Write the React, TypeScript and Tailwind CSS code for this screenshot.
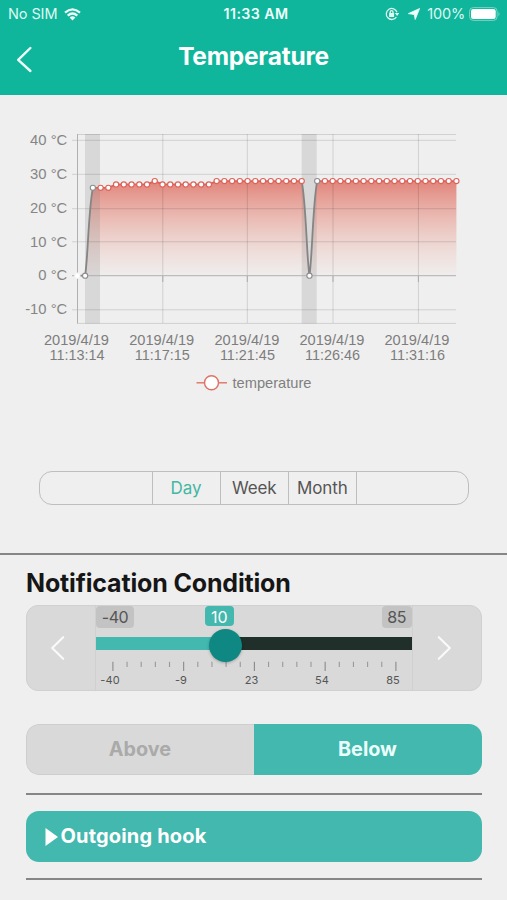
import React from "react";

const X0 = 77.4;
const STEP = 7.735;
const y = (t: number) => 180.7 - t * 3.38;
const readings: number[] = [
  0, 0, 26, 26, 26, 27, 27, 27, 27, 27, 28,
  ...Array<number>(7).fill(27),
  ...Array<number>(12).fill(28),
  0,
  ...Array<number>(19).fill(28),
];
const points = readings.map((t, i) => ({ x: X0 + i * STEP, y: y(t) }));

const ease = (a: { x: number; y: number }, b: { x: number; y: number }) => {
  const flat = Math.abs(a.y - b.y) < 10;
  if (flat) return `L${b.x} ${b.y}`;
  return a.y > b.y
    ? `C${a.x + 3} ${a.y - 20} ${b.x - 4.6} ${b.y + 24} ${b.x} ${b.y}`
    : `C${a.x + 4.6} ${a.y + 24} ${b.x - 3} ${b.y - 20} ${b.x} ${b.y}`;
};
const trace = (from: number, to: number) => {
  let d = `M${points[from].x} ${points[from].y}`;
  for (let i = from + 1; i <= to; i++) d += ease(points[i - 1], points[i]);
  return d;
};

const stamps = [
  [76.5, "11:13:14"],
  [161.7, "11:17:15"],
  [246.9, "11:21:45"],
  [332, "11:26:46"],
  [417, "11:31:16"],
] as const;

function Chart() {
  const last = points[points.length - 1];
  return (
    <svg width="507" height="305" viewBox="0 0 507 305" className="block font-['Liberation_Sans',sans-serif]">
      <defs>
        <linearGradient id="heat" gradientUnits="userSpaceOnUse" x1="0" y1="86" x2="0" y2="181">
          <stop offset="0" stopColor="#df7064" stopOpacity="0.84" />
          <stop offset="1" stopColor="#efb8a8" stopOpacity="0.04" />
        </linearGradient>
      </defs>
      <path d={`${trace(0, 49)}L${last.x} ${y(0)}Z`} fill="url(#heat)" />
      <g fill="#7b7b7b" fillOpacity="0.2">
        <rect x="85" y="39" width="15" height="189.5" />
        <rect x="301.7" y="39" width="15" height="189.5" />
      </g>
      <g stroke="#000" strokeOpacity="0.13" strokeWidth="1">
        <path d="M77 39.5H456M72 45.3H456M72 79.3H456M72 113.7H456M72 146.8H456M72 214.8H456M77 228.4H456" />
        <path d="M162.8 39V228M247.3 39V228M333 39V228M418.4 39V228" />
      </g>
      <path d="M77.5 39V228.5M72 180.7H456" stroke="#b0b0b0" strokeWidth="1" />
      <path d="M162.8 181V187M247.3 181V187M333 181V187M418.4 181V187" stroke="#aaa" strokeWidth="1" />
      <g fill="none" strokeWidth="1.8">
        <path d={trace(0, 2)} stroke="#858585" />
        <path d={trace(2, 29)} stroke="#dc6158" />
        <path d={trace(29, 31)} stroke="#858585" />
        <path d={trace(31, 49)} stroke="#dc6158" />
      </g>
      {points.map((p, i) => (
        <circle
          key={i}
          cx={p.x}
          cy={p.y}
          r="2.6"
          fill="#fff"
          stroke={i === 0 ? "#f5f5f5" : i < 3 || (i > 29 && i < 32) ? "#8d8d8d" : "#dc6158"}
          strokeWidth="1.1"
        />
      ))}
      <g fontSize="14.8" fill="#868686" textAnchor="end">
        {[40, 30, 20, 10, 0, -10].map((t) => (
          <text key={t} x="67.3" y={y(t) + 4.7}>{t} °C</text>
        ))}
      </g>
      <g fontSize="14.4" fill="#7d7d7d" textAnchor="middle">
        {stamps.map(([x, time]) => (
          <React.Fragment key={time}>
            <text x={x} y="250" textLength="65" lengthAdjust="spacingAndGlyphs">2019/4/19</text>
            <text x={x + 0.5} y="264.7" textLength="55" lengthAdjust="spacingAndGlyphs">{time}</text>
          </React.Fragment>
        ))}
      </g>
      <path d="M196.5 287.8H227" stroke="#e07265" strokeWidth="1.4" />
      <circle cx="211.5" cy="287.8" r="7" fill="#fff" stroke="#e07265" strokeWidth="1.4" />
      <text x="232.5" y="292.8" fontSize="14.3" fill="#808080" textLength="79" lengthAdjust="spacingAndGlyphs">temperature</text>
    </svg>
  );
}

function Header() {
  return (
    <header className="h-[95px] bg-[#10b69b] text-white">
      <div className="grid h-7 grid-cols-[1fr_80px_1fr] items-center pr-[6px] pl-2 text-[14.5px]">
        <div className="flex items-center gap-[7px] text-[#dff8f2]">
          <span className="tracking-[-0.1px]">No SIM</span>
          <svg width="17" height="13" viewBox="0 0 17 13" fill="none" stroke="#effffb" strokeWidth="2.2">
            <path d="M1 4.6Q8.5 -1.8 16 4.6M3.7 7.6Q8.5 3.4 13.3 7.6" />
            <path d="M5.6 9.4Q8.5 7 11.4 9.4L8.5 12.4Z" fill="#effffb" stroke="none" />
          </svg>
        </div>
        <div className="pl-[3px] text-center text-[14.2px] font-semibold tracking-[0.4px] whitespace-nowrap text-[#effffb]">11:33 AM</div>
        <div className="flex items-center justify-end text-[#dff8f2]">
          <svg width="14" height="14" viewBox="0 0 14 14" fill="none" stroke="#dff8f2" strokeWidth="1.3">
            <path d="M11.4 10A5.5 5.5 0 1 1 12 5.2" />
            <path d="M9.9 6H14.2L12.1 9Z" fill="#dff8f2" stroke="none" />
            <path d="M5.2 6.3V5A1.4 1.4 0 0 1 8 5V6.3" />
            <rect x="4.1" y="6" width="5" height="3.9" rx=".5" fill="#dff8f2" stroke="none" />
          </svg>
          <svg width="12" height="12" viewBox="0 0 12 12" className="ml-[9px]">
            <path d="M11.6 .5L7.2 11.5L6.3 6.6L.4 5.6Z" fill="#effffb" stroke="#effffb" strokeWidth=".8" strokeLinejoin="round" />
          </svg>
          <span className="ml-[7px] tracking-[-0.2px]">100%</span>
          <svg width="32" height="14" viewBox="0 0 32 14" className="ml-[4px]">
            <rect x=".6" y=".6" width="27.5" height="12.8" rx="3.6" fill="none" stroke="#78d5c4" strokeWidth="1" />
            <rect x="2" y="2" width="24.7" height="10" rx="2.3" fill="#fff" />
            <path d="M29.5 4.5Q31.5 7 29.5 9.5Z" fill="#78d5c4" />
          </svg>
        </div>
      </div>
      <div className="grid h-[67px] grid-cols-[60px_1fr_60px]">
        <svg width="18" height="28" viewBox="0 0 18 28" className="mt-[18px] ml-4">
          <path d="M14.4 2L2.2 13.8L14.4 25" fill="none" stroke="#effffb" strokeWidth="2.4" strokeLinecap="round" strokeLinejoin="round" />
        </svg>
        <h1 className="mt-[11px] text-center text-[24.5px] leading-[34px] font-bold tracking-[-0.25px]">Temperature</h1>
      </div>
    </header>
  );
}

function RangeTabs() {
  return (
    <div className="mx-[38.5px] mt-[70.5px] flex h-[34px] rounded-[13px] border border-[#bebebe] text-[17px] leading-[32px] text-[#555]">
      <div className="w-[113px] border-r border-[#bebebe]" />
      <button className="w-[68px] border-r border-[#bebebe] text-[#42b7a3]">Day</button>
      <button className="w-[68.5px] border-r border-[#bebebe] tracking-[-0.1px]">Week</button>
      <button className="w-[67.5px] border-r border-[#bebebe] tracking-[-0.1px]">Month</button>
    </div>
  );
}

const marks = [
  [110, -40],
  [181, -9],
  [251.5, 23],
  [322, 54],
  [393, 85],
];

function Chevron({ flip = false }: { flip?: boolean }) {
  return (
    <svg width="16" height="26" viewBox="0 0 16 26" className={flip ? "rotate-180" : ""}>
      <path d="M13.2 2.2L2.2 13L13.2 23.8" fill="none" stroke="#fafafa" strokeWidth="2.1" strokeLinecap="round" strokeLinejoin="round" />
    </svg>
  );
}

function ThresholdSlider() {
  return (
    <div className="mt-[5px] flex h-[86px] rounded-[12px] border border-[#d0d0d0] bg-[#d9d9d9]">
      <button className="flex w-[68.5px] items-center justify-center pr-[5px]"><Chevron /></button>
      <div className="relative w-[318px] border-x border-[#d0d0d0]">
        <div className="flex h-[31px] justify-between text-[16px] leading-[23px] text-[#555]">
          <span className="h-[21.5px] w-[38px] rounded-[4px] bg-[#c3c3c3] text-center tracking-[-0.4px]">-40</span>
          <span className="h-[21.5px] w-[30.5px] rounded-[4px] bg-[#c3c3c3] text-center tracking-[-0.4px]">85</span>
        </div>
        <div className="flex h-[12.5px] bg-[#202f2a]">
          <div className="w-[130px] bg-[#43b8ae]" />
        </div>
        <svg width="316" height="40" viewBox="95.5 650 316 40" className="block">
          {Array.from({ length: 21 }, (_, i) => (
            <path
              key={i}
              d={`M${112.4 + i * 14.15} 661.8V${i % 5 === 0 ? 671 : 667}`}
              stroke={i % 5 === 0 ? "#8a8a8a" : "#999"}
              strokeWidth="1.1"
            />
          ))}
          <g fill="#555" fontSize="11" textAnchor="middle" letterSpacing="0.1">
            {marks.map(([x, v]) => <text key={v} x={x - 0.5} y="684.3">{v}</text>)}
          </g>
        </svg>
        <span className="absolute top-0 left-[109px] h-5 w-[28.5px] rounded-[4px] bg-[#43b8ae] text-center text-[16px] leading-[23px] text-white">10</span>
        <div className="absolute top-[22.5px] left-[113.3px] size-[33px] rounded-full bg-[#0f8884] shadow-[0_1px_3px_rgba(0,0,0,0.25)]" />
      </div>
      <button className="flex flex-1 items-center justify-center pr-[6px]"><Chevron flip /></button>
    </div>
  );
}

export default function App() {
  return (
    <div className="h-[900px] w-[507px] overflow-hidden bg-[#efefef] font-['Inter',sans-serif]">
      <Header />
      <Chart />
      <RangeTabs />
      <div className="mt-[48px] h-[2px] bg-[#868686]" />
      <section className="px-[25.5px] pt-[11.5px]">
        <h2 className="pl-[0.5px] text-[25px] leading-[34px] font-bold tracking-[-0.16px] text-[#161616]">Notification Condition</h2>
        <ThresholdSlider />
        <div className="mt-[33px] flex h-[51px] overflow-hidden rounded-[13px] text-[19.8px] leading-[49px] font-bold">
          <button className="w-1/2 rounded-l-[13px] border border-r-0 border-[#cecece] bg-[#d9d9d9] text-[#aaa]">Above</button>
          <button className="w-1/2 bg-[#43b8ae] text-[#eafffb]">Below</button>
        </div>
        <div className="mt-[17.5px] h-[2px] bg-[#868686]" />
        <button className="mt-[16.5px] flex h-[51px] w-full items-center rounded-[13px] bg-[#43b8ae] pl-[19px] text-[20px] font-bold tracking-[0.17px] text-white">
          <svg width="13" height="18" viewBox="0 0 13 18" className="mt-px mr-[3px]">
            <path d="M.5 0V18L13 9Z" fill="#fff" />
          </svg>
          <span className="-mt-px">Outgoing hook</span>
        </button>
        <div className="mt-[16px] h-[2px] bg-[#868686]" />
      </section>
    </div>
  );
}
